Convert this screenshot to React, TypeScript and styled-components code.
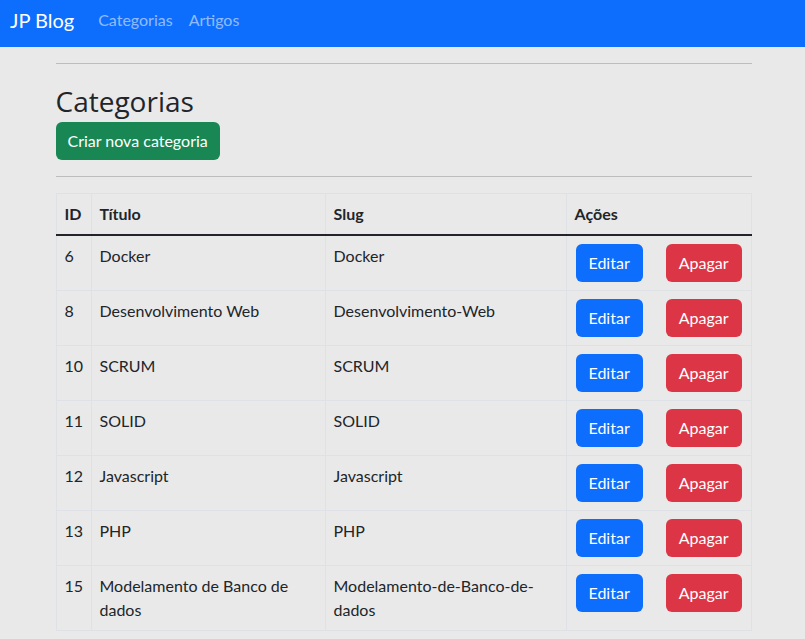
import React from "react";
import styled, { createGlobalStyle } from "styled-components";

const Global = createGlobalStyle`
  html, body { margin: 0; padding: 0; }
  body {
    background: #e9e9e9;
    font-family: Lato, "Open Sans", sans-serif;
    color: #212529;
    font-size: 16px;
    line-height: 24px;
  }
`;

const Navbar = styled.nav`
  height: 47px;
  background: #0d6efd;
  display: flex;
  align-items: center;
  padding: 0 10px;
  box-sizing: border-box;
`;

const Brand = styled.a`
  color: #fff;
  font-size: 20px;
  line-height: 30px;
  margin-right: 16px;
  margin-top: -8px;
  text-decoration: none;
`;

const NavLink = styled.a`
  color: rgba(255, 255, 255, 0.55);
  padding: 0 8px;
  margin-top: -8px;
  text-decoration: none;
`;

const Page = styled.div`
  padding-left: 2px;
`;

const Container = styled.main`
  width: 696px;
  margin: 0 auto;
  padding-top: 16px;
`;

const Rule = styled.hr<{ $gap?: number }>`
  border: 0;
  border-top: 1px solid #bdbdbd;
  margin: ${(p) => p.$gap ?? 0}px 0 0;
`;

const Title = styled.h2`
  font-family: "Open Sans", sans-serif;
  font-size: 28px;
  font-weight: 500;
  line-height: 34px;
  margin: 20px 0 4px;
`;

const Button = styled.button<{ $variant: "success" | "primary" | "danger" }>`
  font-family: inherit;
  font-size: 16px;
  line-height: 24px;
  border: 0;
  border-radius: 6px;
  padding: 7px ${(p) => (p.$variant === "success" ? 12 : 13)}px;
  color: #fff;
  cursor: pointer;
  background: ${(p) =>
    p.$variant === "success" ? "#198754" : p.$variant === "primary" ? "#0d6efd" : "#dc3545"};
`;

const Table = styled.table`
  width: 100%;
  table-layout: fixed;
  border-collapse: collapse;
  margin-top: 16px;
`;

const Th = styled.th<{ $w?: number }>`
  box-sizing: border-box;
  text-align: left;
  font-weight: 700;
  padding: 8px;
  border: 1px solid #dee2e6;
  border-bottom: 2px solid #212529;
  width: ${(p) => (p.$w ? `${p.$w}px` : "auto")};
`;

const Td = styled.td`
  padding: 8px;
  vertical-align: top;
  border: 1px solid #dee2e6;
  font-weight: 400;
`;

const Actions = styled.div`
  display: flex;
  justify-content: space-between;
  padding: 0 1px;
`;

const rows: [number, string, string][] = [
  [6, "Docker", "Docker"],
  [8, "Desenvolvimento Web", "Desenvolvimento-Web"],
  [10, "SCRUM", "SCRUM"],
  [11, "SOLID", "SOLID"],
  [12, "Javascript", "Javascript"],
  [13, "PHP", "PHP"],
  [15, "Modelamento de Banco de dados", "Modelamento-de-Banco-de-dados"],
];

export default function App() {
  return (
    <>
      <Global />
      <Navbar>
        <Brand href="#">JP Blog</Brand>
        <NavLink href="#">Categorias</NavLink>
        <NavLink href="#">Artigos</NavLink>
      </Navbar>
      <Page>
        <Container>
          <Rule />
          <Title>Categorias</Title>
          <Button $variant="success">Criar nova categoria</Button>
          <Rule $gap={16} />
          <Table>
            <thead>
              <tr>
                <Th $w={35}>ID</Th>
                <Th $w={234}>Título</Th>
                <Th $w={241}>Slug</Th>
                <Th>Ações</Th>
              </tr>
            </thead>
            <tbody>
              {rows.map(([id, t, s]) => (
                <tr key={id}>
                  <Td>{id}</Td>
                  <Td>{t}</Td>
                  <Td>{s}</Td>
                  <Td>
                    <Actions>
                      <Button $variant="primary">Editar</Button>
                      <Button $variant="danger">Apagar</Button>
                    </Actions>
                  </Td>
                </tr>
              ))}
            </tbody>
          </Table>
        </Container>
      </Page>
    </>
  );
}
